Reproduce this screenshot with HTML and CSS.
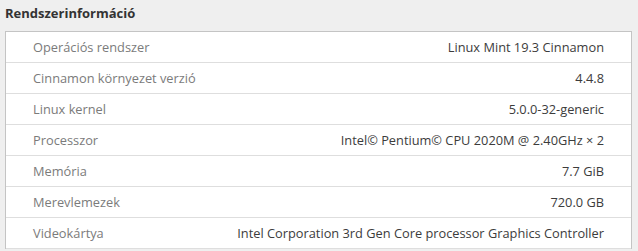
FILE: index.html
```html
<html>
    <head>
        <link rel="stylesheet" href="styles.css">
        <title>Rendszerinformáció</title>
    </head>
    <body>
        <h1 class="title">Rendszerinformáció</h1>
        <div class="infoBox">
            <div class="row"><span class="label">Operációs rendszer</span><span class="value">Linux Mint 19.3 Cinnamon</span></div>
            <div class="row"><span class="label">Cinnamon környezet verzió</span><span class="value">4.4.8</span></div>
            <div class="row"><span class="label">Linux kernel</span><span class="value">5.0.0-32-generic</span></div>
            <div class="row"><span class="label">Processzor</span><span class="value">Intel© Pentium© CPU 2020M @ 2.40GHz × 2</span></div>
            <div class="row"><span class="label">Memória</span><span class="value">7.7 GiB</span></div>
            <div class="row"><span class="label">Merevlemezek</span><span class="value">720.0 GB</span></div>
            <div class="row"><span class="label">Videokártya</span><span class="value">Intel Corporation 3rd Gen Core processor Graphics Controller</span></div>
        </div>
    </body>
</html>
```
FILE: styles.css
```css
html, body {margin: 0; padding: 0; background: #efefef;}
body {font-family: "Open Sans", sans-serif; font-size: 12.8px; color: #3c3c3c; padding: 0 6px 0 5px; height: 251px; overflow: hidden;}

.title {font-size: 13px; font-weight: bold; margin: 0; height: 31px; line-height: 26px; color: #333;}

.infoBox {
    background: #fff;
    border: 1px solid #c4c4c4;
    border-bottom: none;
}

.row {
    display: flex;
    justify-content: space-between;
    align-items: center;
    height: 30px;
    border-bottom: 1px solid #dedede;
    padding: 0 27px 0 27px;
}

.label {color: #7b7b7b;}
.value {color: #3c3c3c;}
```
